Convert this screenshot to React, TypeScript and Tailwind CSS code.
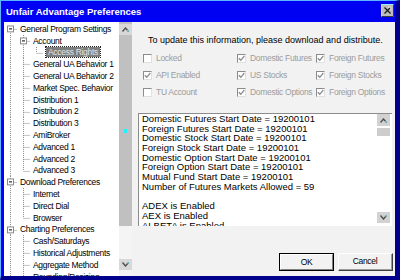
type Row = {
  label: string;
  depth: number;
  guides: boolean[];
  more: boolean;
  kids?: boolean;
  first?: boolean;
  selected?: boolean;
};

const leaf = (label: string, more = true): Row => ({ label, depth: 1, guides: [true], more });

const rows: Row[] = [
  { label: 'General Program Settings', depth: 0, guides: [], kids: true, more: true, first: true },
  { label: 'Account', depth: 1, guides: [true], kids: true, more: true },
  { label: 'Access Rights', depth: 2, guides: [true, true], more: false, selected: true },
  leaf('General UA Behavior 1'),
  leaf('General UA Behavior 2'),
  leaf('Market Spec. Behavior'),
  leaf('Distribution 1'),
  leaf('Distribution 2'),
  leaf('Distribution 3'),
  leaf('AmiBroker'),
  leaf('Advanced 1'),
  leaf('Advanced 2'),
  leaf('Advanced 3', false),
  { label: 'Download Preferences', depth: 0, guides: [], kids: true, more: true },
  leaf('Internet'),
  leaf('Direct Dial'),
  leaf('Browser', false),
  { label: 'Charting Preferences', depth: 0, guides: [], kids: true, more: true },
  leaf('Cash/Saturdays'),
  leaf('Historical Adjustments'),
  leaf('Aggregate Method'),
  leaf('Rounding/Resizing'),
];

const details = [
  'Domestic Futures Start Date = 19200101',
  'Foreign Futures Start Date = 19200101',
  'Domestic Stock Start Date = 19200101',
  'Foreign Stock Start Date = 19200101',
  'Domestic Option Start Date = 19200101',
  'Foreign Option Start Date = 19200101',
  'Mutual Fund Start Date = 19200101',
  'Number of Futures Markets Allowed = 59',
  '',
  'ADEX is Enabled',
  'AEX is Enabled',
  'ALBETA is Enabled',
];

const checks = [
  { label: 'Locked', on: false },
  { label: 'Domestic Futures', on: true },
  { label: 'Foreign Futures', on: true },
  { label: 'API Enabled', on: true },
  { label: 'US Stocks', on: true },
  { label: 'Foreign Stocks', on: true },
  { label: 'TU Account', on: false },
  { label: 'Domestic Options', on: true },
  { label: 'Foreign Options', on: true },
];

const dot = { stroke: '#8a8a8a', strokeDasharray: '1 1' };

function Guide({ line }: { line: boolean }) {
  return (
    <svg viewBox="0 0 13 12" preserveAspectRatio="none" className="h-full w-[13px] shrink-0">
      {line && <line x1="6.5" y1="0" x2="6.5" y2="12" {...dot} />}
    </svg>
  );
}

function Branch({ row }: { row: Row }) {
  return (
    <svg viewBox="0 0 13 12" preserveAspectRatio="none" className="h-full w-[13px] shrink-0">
      {!row.first && <line x1="6.5" y1="0" x2="6.5" y2="6" {...dot} />}
      {row.more && <line x1="6.5" y1="6" x2="6.5" y2="12" {...dot} />}
      <line x1="6.5" y1="6.5" x2="13" y2="6.5" {...dot} />
      {row.kids && (
        <>
          <rect x="3.5" y="3" width="6" height="6" fill="#fff" stroke="#8a8a8a" />
          <line x1="5" y1="6" x2="8" y2="6" stroke="#000" />
        </>
      )}
    </svg>
  );
}

function Arrow({ up }: { up?: boolean }) {
  return (
    <svg width="7" height="5" viewBox="0 0 7 5">
      <path d={up ? 'M0.5 4.5 L3.5 1 L6.5 4.5' : 'M0.5 0.5 L3.5 4 L6.5 0.5'} fill="none" stroke="#505050" strokeWidth="1.4" />
      <rect x="5" y={up ? 3 : 0} width="1.5" height="1.5" fill="#2ee6f0" />
    </svg>
  );
}

function Check({ on }: { on: boolean }) {
  return (
    <div className="w-[9px] h-[9px] shrink-0 bg-white border-t border-l border-[#8c8c8c] border-r-[#e0e0e0] border-b-[#e0e0e0] border-r border-b flex items-center justify-center">
      {on && (
        <svg width="7" height="7" viewBox="0 0 7 7">
          <path d="M0.8 3.2 L2.8 5.3 L6.3 1" fill="none" stroke="#8c8c8c" strokeWidth="1.3" />
        </svg>
      )}
    </div>
  );
}

export default function App() {
  return (
    <div className="w-[400px] h-[280px] flex flex-col bg-[#0000f2] border-t border-l border-t-[#5fb4ff] border-l-[#5fb4ff] border-r-[5px] border-b-[4px] border-r-[#00008c] border-b-[#00008c] pl-[3px] overflow-hidden font-['Liberation_Sans',Arial,sans-serif] text-[8.5px] tracking-[-0.3px] text-black">
      {/* title bar */}
      <div className="h-[21px] shrink-0 flex justify-between pt-[3px] pl-[2px]">
        <span className="mt-[3px] text-[9.5px] leading-none tracking-normal font-bold text-white">
          Unfair Advantage Preferences
        </span>
        <svg width="13" height="13" viewBox="0 0 13 13" className="mr-[1px]">
          <rect x="0" y="0" width="13" height="13" fill="#bcbcbc" />
          <path d="M0.5 12.5 V0.5 H12.5" fill="none" stroke="#8ff4ff" />
          <path d="M12.5 0.5 V12.5 H0.5" fill="none" stroke="#3a3a3a" />
          <path d="M3.5 3.5 L9.5 9.5 M9.5 3.5 L3.5 9.5" stroke="#1a1a1a" strokeWidth="1.3" />
          <path d="M7 3.2 H9.8 V6" fill="none" stroke="#f4f4f4" strokeWidth="0.8" />
        </svg>
      </div>

      {/* client */}
      <div className="flex-1 flex bg-[#f2f2f2] min-h-0">
        <div className="w-[115px] shrink-0 bg-white pt-[1px] overflow-hidden">
          {rows.map((row) => (
            <div key={row.label} className="h-[11.8px] flex items-center whitespace-nowrap">
              {row.guides.map((g, i) => (
                <Guide key={i} line={g} />
              ))}
              <Branch row={row} />
              {row.selected ? (
                <span className="ml-[3px] px-[2px] h-[10px] leading-[10px] bg-[#7e7e7e] text-[#e4e4e4] outline outline-1 outline-dotted outline-[#222]">
                  {row.label}
                </span>
              ) : (
                <span className="ml-[3px] leading-[10px]">{row.label}</span>
              )}
            </div>
          ))}
        </div>

        {/* tree scrollbar */}
        <div className="w-[13px] shrink-0 flex flex-col">
          <div className="h-[2px] bg-[#c0c0c0]" />
          <div className="h-[11px] bg-[#d8d8d8] flex items-center justify-center">
            <Arrow up />
          </div>
          <div className="h-[191px] bg-[#c0c0c0] flex items-center justify-center">
            <div className="w-[3px] h-[4px] bg-[#22f0ff]" />
          </div>
          <div className="h-[33px] bg-[#f4f4f4]" />
          <div className="h-[11px] bg-[#d8d8d8] flex items-center justify-center">
            <Arrow />
          </div>
          <div className="flex-1 bg-[#f4f4f4]" />
        </div>

        {/* right side */}
        <div className="flex-1 flex flex-col">
          <div className="ml-[16px] mt-[13px] h-[10px] leading-[10px] text-[9px] tracking-normal whitespace-nowrap">
            To update this information, please download and distribute.
          </div>

          <div className="ml-[11px] mt-[5px] grid grid-cols-[94px_79px_auto]">
            {checks.map((c) => (
              <div key={c.label} className="h-[17px] flex items-center gap-[4px] whitespace-nowrap text-[#9c9c9c]">
                <Check on={c.on} />
                <span>{c.label}</span>
              </div>
            ))}
          </div>

          <div className="ml-[6px] mt-[12px] w-[254px] h-[113px] shrink-0 bg-white border-t border-l border-[#8c8c8c] flex overflow-hidden">
            <div className="flex-1 pl-[3px] text-[9.5px] tracking-normal leading-[9.7px] whitespace-pre">
              {details.map((d, i) => (
                <div key={i} className="h-[9.7px]">
                  {d}
                </div>
              ))}
            </div>
            <div className="w-[13px] mr-[2px] flex flex-col">
              <div className="h-[12px] bg-[#d2d2d2] flex items-center justify-center">
                <Arrow up />
              </div>
              <div className="mt-[2px] h-[8px] bg-[#cdcdcd]" />
              <div className="flex-1" />
              <div className="mb-[3px] h-[11px] bg-[#d2d2d2] flex items-center justify-center">
                <Arrow />
              </div>
            </div>
          </div>

          <div className="mt-[27px] pr-[2px] flex justify-end gap-[4px]">
            <div className="w-[55px] h-[18px] border border-black flex">
              <div className="flex-1 border-t border-l border-white border-r border-b border-r-[#808080] border-b-[#808080] flex items-center justify-center">
                OK
              </div>
            </div>
            <div className="w-[55px] h-[18px] border-t border-l border-white border-r border-b border-r-[#404040] border-b-[#404040] flex">
              <div className="flex-1 border-r border-b border-[#9a9a9a] flex items-center justify-center">
                Cancel
              </div>
            </div>
          </div>
        </div>
      </div>
    </div>
  );
}
